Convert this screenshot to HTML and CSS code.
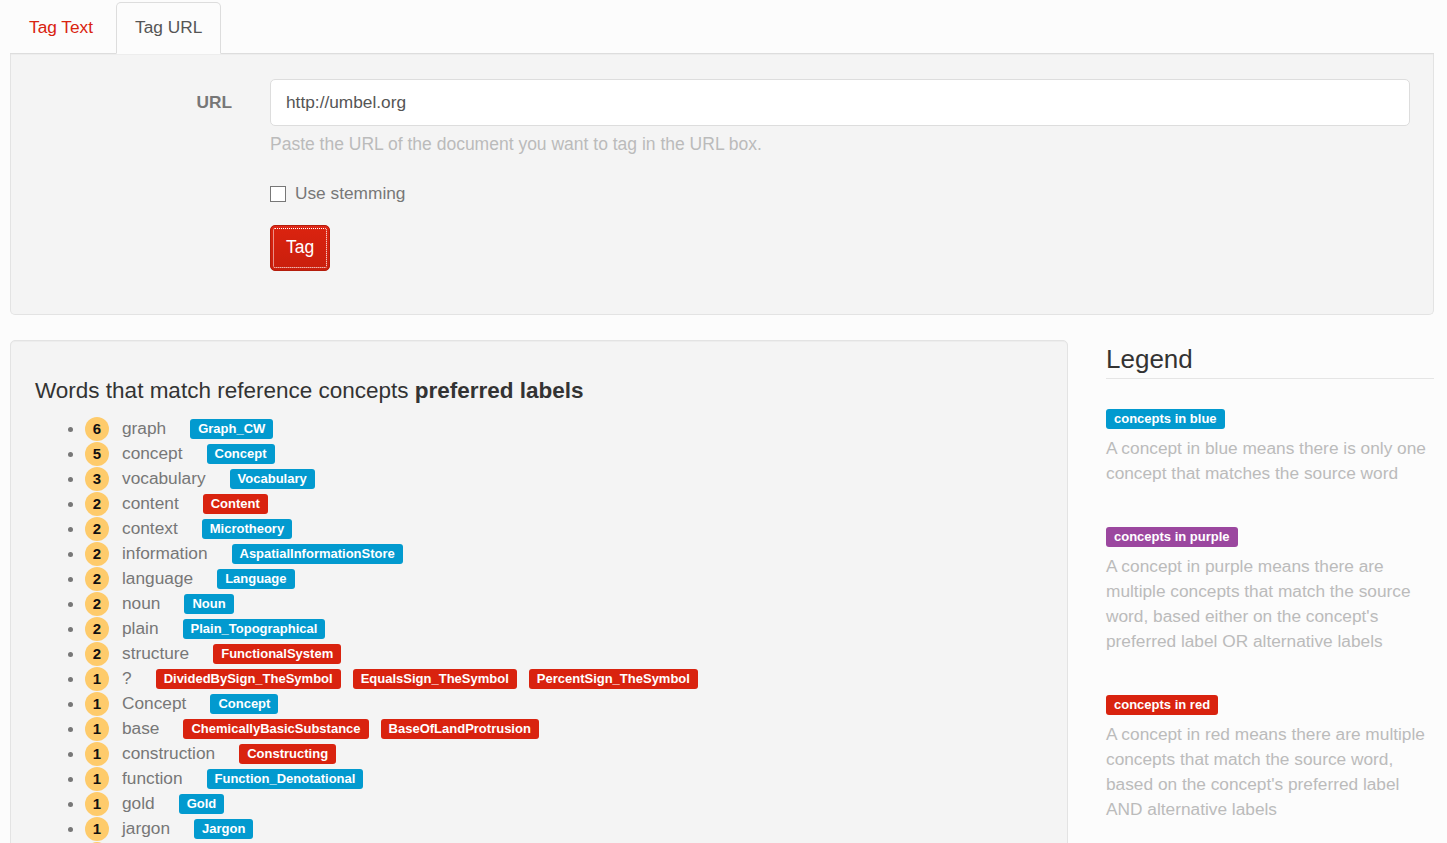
FILE: index.html
```html
<!DOCTYPE html>
<html lang="en">
<head>
    <meta charset="UTF-8">
    <meta name="viewport" content="width=device-width, initial-scale=1.0">
    <title>Concepts Tagger</title>
    <link rel="stylesheet" href="styles.css">
</head>
<body>

<div class="page">
    <ul class="tabs">
        <li><a href="#">Tag Text</a></li>
        <li class="active"><a href="#">Tag URL</a></li>
    </ul>

    <div class="well tag-form">
        <label class="form-label" for="url">URL</label>
        <div class="form-field">
            <input type="text" id="url" value="http://umbel.org">
            <p class="help">Paste the URL of the document you want to tag in the URL box.</p>
            <label class="check"><span class="box"></span>Use stemming</label>
            <button class="btn">Tag</button>
        </div>
    </div>

    <div class="results-row">
        <div class="well results">
            <h4>Words that match reference concepts <b>preferred labels</b></h4>
            <ul class="matches">
                <li><div class="match"><span class="badge">6</span><span class="word">graph</span><span class="label blue">Graph_CW</span></div></li>
                <li><div class="match"><span class="badge">5</span><span class="word">concept</span><span class="label blue">Concept</span></div></li>
                <li><div class="match"><span class="badge">3</span><span class="word">vocabulary</span><span class="label blue">Vocabulary</span></div></li>
                <li><div class="match"><span class="badge">2</span><span class="word">content</span><span class="label red">Content</span></div></li>
                <li><div class="match"><span class="badge">2</span><span class="word">context</span><span class="label blue">Microtheory</span></div></li>
                <li><div class="match"><span class="badge">2</span><span class="word">information</span><span class="label blue">AspatialInformationStore</span></div></li>
                <li><div class="match"><span class="badge">2</span><span class="word">language</span><span class="label blue">Language</span></div></li>
                <li><div class="match"><span class="badge">2</span><span class="word">noun</span><span class="label blue">Noun</span></div></li>
                <li><div class="match"><span class="badge">2</span><span class="word">plain</span><span class="label blue">Plain_Topographical</span></div></li>
                <li><div class="match"><span class="badge">2</span><span class="word">structure</span><span class="label red">FunctionalSystem</span></div></li>
                <li><div class="match"><span class="badge">1</span><span class="word">?</span><span class="label red">DividedBySign_TheSymbol</span><span class="label red">EqualsSign_TheSymbol</span><span class="label red">PercentSign_TheSymbol</span></div></li>
                <li><div class="match"><span class="badge">1</span><span class="word">Concept</span><span class="label blue">Concept</span></div></li>
                <li><div class="match"><span class="badge">1</span><span class="word">base</span><span class="label red">ChemicallyBasicSubstance</span><span class="label red">BaseOfLandProtrusion</span></div></li>
                <li><div class="match"><span class="badge">1</span><span class="word">construction</span><span class="label red">Constructing</span></div></li>
                <li><div class="match"><span class="badge">1</span><span class="word">function</span><span class="label blue">Function_Denotational</span></div></li>
                <li><div class="match"><span class="badge">1</span><span class="word">gold</span><span class="label blue">Gold</span></div></li>
                <li><div class="match"><span class="badge">1</span><span class="word">jargon</span><span class="label blue">Jargon</span></div></li>
                <li><div class="match"><span class="badge">1</span><span class="word">label</span><span class="label blue">Label</span></div></li>
            </ul>
        </div>

        <div class="legend">
            <h2>Legend</h2>
            <div class="legend-item">
                <span class="label blue">concepts in blue</span>
                <p>A concept in blue means there is only one concept that matches the source word</p>
            </div>
            <div class="legend-item">
                <span class="label purple">concepts in purple</span>
                <p>A concept in purple means there are multiple concepts that match the source word, based either on the concept's preferred label OR alternative labels</p>
            </div>
            <div class="legend-item">
                <span class="label red">concepts in red</span>
                <p>A concept in red means there are multiple concepts that match the source word, based on the concept's preferred label AND alternative labels</p>
            </div>
        </div>
    </div>
</div>

</body>
</html>
```

FILE: styles.css
```css
html, body {
    margin: 0;
    padding: 0;
}
body {
    font-family: "Liberation Sans", Arial, sans-serif;
    font-size: 17.3px;
    line-height: 25px;
    color: #777;
    background-color: #fcfcfc;
}
.page {
    padding: 2px 13px 0 10px;
}

/* tabs */
.tabs {
    display: flex;
    list-style: none;
    margin: 0;
    padding: 0;
    border-bottom: 1px solid #ddd;
}
.tabs li {
    margin-right: 4px;
    margin-bottom: -1px;
}
.tabs a {
    display: block;
    padding: 12px 18px 13px;
    border: 1px solid transparent;
    border-radius: 5px 5px 0 0;
    color: #d9230f;
    text-decoration: none;
}
.tabs .active a {
    color: #555;
    background-color: #fcfcfc;
    border-color: #ddd #ddd transparent;
}

/* wells */
.well {
    background-color: #f4f4f4;
    border: 1px solid #e3e3e3;
    border-radius: 5px;
    box-shadow: inset 0 1px 1px rgba(0,0,0,0.03);
    margin-bottom: 25px;
}
.tag-form {
    border-top: none;
    border-radius: 0 0 5px 5px;
    display: grid;
    grid-template-columns: 221px 1fr;
    column-gap: 38px;
    padding: 25px 23px 43px 0;
}
.form-label {
    text-align: right;
    font-weight: bold;
    line-height: 47px;
}
.form-field input[type="text"] {
    display: block;
    box-sizing: border-box;
    width: 100%;
    height: 47px;
    padding: 0 15px;
    font-family: inherit;
    font-size: 17.3px;
    color: #555;
    background-color: #fff;
    border: 1px solid #ddd;
    border-radius: 5px;
}
.help {
    margin: 6px 0 0;
    font-size: 17.5px;
    color: #bbb;
}
.check {
    display: flex;
    align-items: center;
    margin-top: 24px;
}
.check .box {
    width: 14px;
    height: 14px;
    border: 1px solid #777;
    background-color: #fff;
    margin-right: 9px;
}
.btn {
    display: block;
    margin-top: 19px;
    padding: 9px 15px 10px;
    font-family: inherit;
    font-size: 17.5px;
    line-height: 25px;
    color: #fff;
    background-color: #d9230f;
    background-image: linear-gradient(#e0281a, #d9230f 10%, #c91f0d);
    border: 1px solid #b41d0c;
    border-radius: 5px;
    outline: 1px dotted #fff;
    outline-offset: -4px;
    cursor: pointer;
}

/* results */
.results-row {
    display: grid;
    grid-template-columns: 1058px 1fr;
    column-gap: 38px;
}
.results {
    padding: 0 24px 20px;
}
.results h4 {
    margin: 37px 0 13px;
    font-size: 22.5px;
    font-weight: normal;
    line-height: 25px;
    color: #333;
}
.matches {
    margin: 0;
    padding-left: 50px;
}
.matches li {
    height: 25px;
}
.match {
    display: inline-flex;
    align-items: center;
    height: 25px;
    vertical-align: top;
}
.badge {
    width: 24px;
    height: 24px;
    border-radius: 50%;
    background-color: #fecb6b;
    color: #111;
    font-size: 15px;
    font-weight: bold;
    line-height: 24px;
    text-align: center;
    margin-right: 13px;
}
.word {
    margin-right: 24px;
}
.label {
    display: inline-block;
    padding: 3px 8px 4px;
    font-size: 13px;
    font-weight: bold;
    line-height: 13px;
    color: #fff;
    border-radius: 3px;
    margin-right: 12px;
    margin-top: 1px;
}
.blue {
    background-color: #029acf;
}
.red {
    background-color: #d9230f;
}
.purple {
    background-color: #9b479f;
}

/* legend */
.legend h2 {
    margin: 0 0 26px;
    font-size: 26px;
    font-weight: normal;
    line-height: 38px;
    color: #333;
    border-bottom: 1px solid #e5e5e5;
}
.legend-item {
    margin-bottom: 37px;
}
.legend-item .label {
    margin-top: 4px;
}
.legend-item p {
    margin: 6px 0 0;
    color: #bbb;
}
```
